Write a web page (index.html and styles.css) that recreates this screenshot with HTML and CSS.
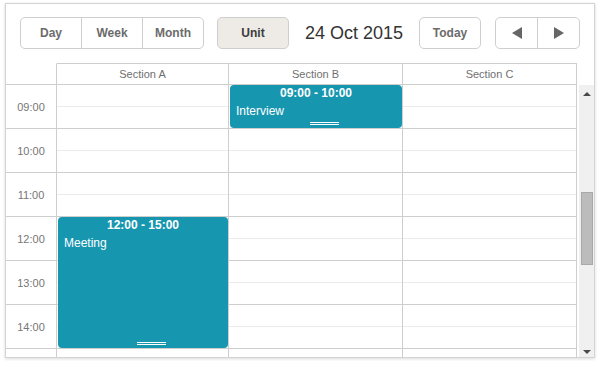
FILE: index.html
```html
<!doctype html>
<html>
<head>
	<title>Scheduler - Units view</title>
	<meta charset="utf-8">
	<link rel="stylesheet" href="styles.css">
</head>
<body>
	<div class="scheduler">
		<div class="toolbar">
			<div class="btn-group">
				<div class="btn tab">Day</div>
				<div class="btn tab">Week</div>
				<div class="btn tab">Month</div>
			</div>
			<div class="btn unit active">Unit</div>
			<div class="date">24 Oct 2015</div>
			<div class="btn today">Today</div>
			<div class="btn-group nav">
				<div class="btn arrow"><span class="tri-left"></span></div>
				<div class="btn arrow"><span class="tri-right"></span></div>
			</div>
		</div>

		<div class="header">
			<div class="head-time"></div>
			<div class="head-cell first">Section A</div>
			<div class="head-cell">Section B</div>
			<div class="head-cell">Section C</div>
			<div class="head-spacer"></div>
		</div>

		<div class="data">
			<div class="time-col">
				<div class="time-cell">09:00</div>
				<div class="time-cell">10:00</div>
				<div class="time-cell">11:00</div>
				<div class="time-cell">12:00</div>
				<div class="time-cell">13:00</div>
				<div class="time-cell">14:00</div>
				<div class="time-cell"></div>
			</div>

			<!-- Section A -->
			<div class="section-col first">
				<div class="hour"><div class="half"></div></div>
				<div class="hour"><div class="half"></div></div>
				<div class="hour"><div class="half"></div></div>
				<div class="hour"><div class="half"></div></div>
				<div class="hour"><div class="half"></div></div>
				<div class="hour"><div class="half"></div></div>
				<div class="hour"><div class="half"></div></div>
				<div class="event meeting">
					<div class="event-time">12:00 - 15:00</div>
					<div class="event-text">Meeting</div>
					<div class="resize"></div>
				</div>
			</div>

			<!-- Section B -->
			<div class="section-col">
				<div class="hour"><div class="half"></div></div>
				<div class="hour"><div class="half"></div></div>
				<div class="hour"><div class="half"></div></div>
				<div class="hour"><div class="half"></div></div>
				<div class="hour"><div class="half"></div></div>
				<div class="hour"><div class="half"></div></div>
				<div class="hour"><div class="half"></div></div>
				<div class="event interview">
					<div class="event-time">09:00 - 10:00</div>
					<div class="event-text">Interview</div>
					<div class="resize"></div>
				</div>
			</div>

			<!-- Section C -->
			<div class="section-col">
				<div class="hour"><div class="half"></div></div>
				<div class="hour"><div class="half"></div></div>
				<div class="hour"><div class="half"></div></div>
				<div class="hour"><div class="half"></div></div>
				<div class="hour"><div class="half"></div></div>
				<div class="hour"><div class="half"></div></div>
				<div class="hour"><div class="half"></div></div>
			</div>

			<div class="scrollbar">
				<span class="sb-up"></span>
				<div class="sb-thumb"></div>
				<span class="sb-down"></span>
			</div>
		</div>
	</div>
</body>
</html>
```

FILE: styles.css
```css
body {
	margin: 0;
	padding: 3px 5px;
	background-color: #fff;
	font-family: "Liberation Sans", Arial, sans-serif;
}

.scheduler {
	width: 590px;
	height: 355px;
	box-sizing: border-box;
	border: 1px solid #d3d3d3;
	box-shadow: 0 1px 3px rgba(0, 0, 0, 0.15);
	overflow: hidden;
	display: flex;
	flex-direction: column;
}

/* toolbar */

.toolbar {
	height: 59px;
	box-sizing: border-box;
	padding: 13px 0 0 14px;
	display: flex;
	align-items: flex-start;
}

.btn {
	height: 32px;
	box-sizing: border-box;
	line-height: 30px;
	text-align: center;
	font-size: 12px;
	font-weight: bold;
	color: #6b6b6b;
	border: 1px solid #cecece;
	border-radius: 5px;
	background-color: #fff;
}

.btn-group {
	display: flex;
	border: 1px solid #cecece;
	border-radius: 5px;
	height: 32px;
	box-sizing: border-box;
}

.btn-group .btn {
	border: none;
	border-radius: 0;
	height: 30px;
	width: 60px;
	background: transparent;
}

.btn-group .btn + .btn {
	width: 61px;
	border-left: 1px solid #cecece;
}

.unit {
	width: 72px;
	margin-left: 13px;
}

.active {
	background-color: #eeebe6;
	color: #3d3d3d;
}

.date {
	margin: 0 16px;
	height: 32px;
	line-height: 32px;
	font-size: 18px;
	color: #333;
}

.today {
	width: 62px;
}

.nav {
	margin-left: 14px;
}

.nav .btn {
	width: 41px;
}

.nav .btn + .btn {
	width: 42px;
}

.tri-left, .tri-right {
	display: inline-block;
	width: 0;
	height: 0;
	border-top: 6px solid transparent;
	border-bottom: 6px solid transparent;
	vertical-align: -2px;
}

.tri-left {
	border-right: 10px solid #666;
}

.tri-right {
	border-left: 10px solid #666;
}

/* header */

.header {
	display: flex;
	height: 22px;
}

.head-time {
	width: 51px;
	box-sizing: border-box;
	border-top: 1px solid transparent;
	border-right: 1px solid #cecece;
	border-bottom: 1px solid #cecece;
}

.head-cell {
	width: 174px;
	box-sizing: border-box;
	border-top: 1px solid #cecece;
	border-right: 1px solid #cecece;
	border-bottom: 1px solid #cecece;
	line-height: 20px;
	text-align: center;
	font-size: 11px;
	color: #707070;
}

.head-cell.first {
	width: 172px;
}

.head-spacer {
	width: 17px;
}

/* data area */

.data {
	display: flex;
	height: 272px;
	overflow: hidden;
}

.time-col {
	width: 51px;
	box-sizing: border-box;
	border-right: 1px solid #cecece;
}

.time-cell {
	height: 44px;
	box-sizing: border-box;
	border-bottom: 1px solid #cecece;
	line-height: 44px;
	text-align: center;
	font-size: 11px;
	color: #767676;
}

.section-col {
	width: 174px;
	box-sizing: border-box;
	border-right: 1px solid #cecece;
	position: relative;
}

.section-col.first {
	width: 172px;
}

.hour {
	height: 44px;
	box-sizing: border-box;
	border-bottom: 1px solid #cecece;
}

.half {
	height: 22px;
	box-sizing: border-box;
	border-bottom: 1px solid #ebebeb;
}

/* events */

.event {
	position: absolute;
	left: 1px;
	right: 0;
	background-color: #1796b0;
	border-radius: 4px;
	color: #fff;
}

.interview {
	top: 0;
	height: 43px;
}

.meeting {
	top: 132px;
	height: 131px;
}

.event-time {
	padding-top: 1px;
	line-height: 14px;
	text-align: center;
	font-size: 12px;
	font-weight: bold;
}

.event-text {
	margin-top: 3px;
	padding-left: 6px;
	line-height: 16px;
	font-size: 12px;
}

.resize {
	position: absolute;
	left: calc(50% - 6px);
	bottom: 3px;
	width: 29px;
	height: 3px;
	border-top: 1px solid #fff;
	border-bottom: 1px solid #fff;
	box-sizing: border-box;
}

/* scrollbar */

.scrollbar {
	width: 15px;
	margin-left: 2px;
	background-color: #f0f0f0;
	position: relative;
}

.sb-up, .sb-down {
	position: absolute;
	left: 4px;
	width: 0;
	height: 0;
	border-left: 4px solid transparent;
	border-right: 4px solid transparent;
}

.sb-up {
	top: 7px;
	border-bottom: 4px solid #4a4a4a;
}

.sb-down {
	bottom: 3px;
	border-top: 4px solid #4a4a4a;
}

.sb-thumb {
	position: absolute;
	top: 107px;
	left: 2px;
	width: 12px;
	height: 73px;
	box-sizing: border-box;
	background-color: #bcbcbc;
	border: 1px solid #a9a9a9;
}
```
